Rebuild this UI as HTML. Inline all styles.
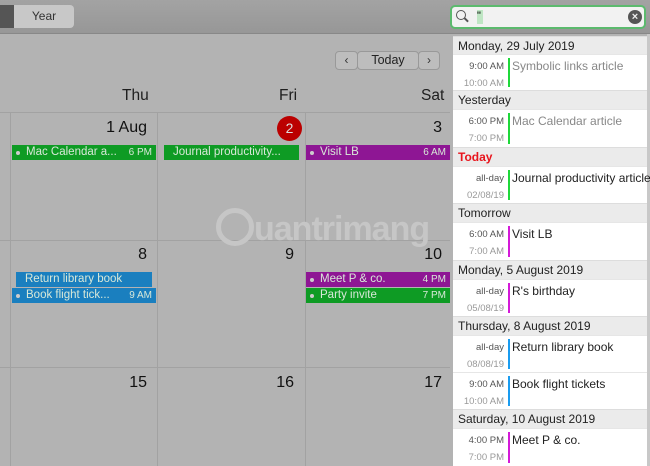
<!DOCTYPE html>
<html><head><style>
*{margin:0;padding:0;box-sizing:border-box}
body{width:650px;height:466px;overflow:hidden;background:#b3b3b3;font-family:"Liberation Sans",sans-serif;position:relative}
.abs{position:absolute}
.tb{left:0;top:0;width:650px;height:34px;background:linear-gradient(#a3a3a3,#979797);border-bottom:1px solid #888}
.vl{top:112px;width:1px;height:354px;background:#a2a2a2}
.hl{left:0;width:450px;height:1px;background:#a2a2a2}
.dn{font-size:15.5px;color:#1e1e1e}
.num{font-size:16px;color:#111;text-align:right}
.ev{height:15px;font-size:11.5px;color:#d8e8d8;line-height:15px;white-space:nowrap;overflow:hidden}
.ev .t{position:absolute;right:4px;top:0;font-size:10px}
.panel{left:453px;top:36px;width:194px;height:430px;background:#fff}
.sh{position:absolute;left:0;width:194px;height:19px;background:#ebebeb;font-size:12px;color:#222;padding-left:5px;line-height:19px;border-top:1px solid #ddd}
.row{position:absolute;left:0;width:194px;border-top:1px solid #e6e6e6}
.row .a{position:absolute;right:143px;top:6px;font-size:9.5px;color:#555;white-space:nowrap}
.row .b{position:absolute;right:143px;top:23px;font-size:9.5px;color:#999;white-space:nowrap}
.row .bar{position:absolute;left:55px;top:3px;width:2px;bottom:3px}
.row .n{position:absolute;left:59px;top:4px;font-size:12px;color:#222;white-space:nowrap}
</style></head><body>
<div class="abs tb"></div>
<div class="abs" style="left:0;top:5px;width:14px;height:23px;background:#555"></div>
<div class="abs" style="left:14px;top:5px;width:60px;height:23px;background:#c8c8c8;border-radius:0 4px 4px 0;font-size:12px;color:#333;line-height:23px;text-align:center">Year</div>
<div class="abs" style="left:335px;top:51px;width:23px;height:19px;background:#bdbdbd;border:1px solid #999;border-radius:4px;font-size:12px;text-align:center;line-height:17px;color:#333">&lsaquo;</div>
<div class="abs" style="left:357px;top:51px;width:62px;height:19px;background:#bdbdbd;border:1px solid #999;border-radius:4px;font-size:12.5px;text-align:center;line-height:17px;color:#222">Today</div>
<div class="abs" style="left:418px;top:51px;width:22px;height:19px;background:#bdbdbd;border:1px solid #999;border-radius:4px;font-size:12px;text-align:center;line-height:17px;color:#333">&rsaquo;</div>
<div class="abs dn" style="left:122px;top:87px">Thu</div>
<div class="abs dn" style="left:279px;top:87px">Fri</div>
<div class="abs dn" style="left:421px;top:87px">Sat</div>
<div class="abs hl" style="top:112px"></div>
<div class="abs hl" style="top:240px"></div>
<div class="abs hl" style="top:367px"></div>
<div class="abs vl" style="left:10px"></div>
<div class="abs vl" style="left:157px"></div>
<div class="abs vl" style="left:305px"></div>
<div class="abs num" style="left:60px;top:119px;width:87px">1 Aug</div>
<div class="abs" style="left:277px;top:116px;width:25px;height:25px;border-radius:50%;background:#b00;color:#ddd;font-size:14px;text-align:center;line-height:25px">2</div>
<div class="abs num" style="left:350px;top:119px;width:92px">3</div>
<div class="abs num" style="left:60px;top:246px;width:87px">8</div>
<div class="abs num" style="left:200px;top:246px;width:94px">9</div>
<div class="abs num" style="left:350px;top:246px;width:92px">10</div>
<div class="abs num" style="left:60px;top:374px;width:87px">15</div>
<div class="abs num" style="left:200px;top:374px;width:94px">16</div>
<div class="abs num" style="left:350px;top:374px;width:92px">17</div>
<div class="abs ev" style="left:12px;top:145px;width:144px;background:#0e9b24;padding-left:14px">Mac Calendar a...<span class="t">6 PM</span><span style="position:absolute;left:4px;top:6px;width:4px;height:4px;border-radius:50%;background:#ccc"></span></div>
<div class="abs ev" style="left:164px;top:145px;width:135px;background:#0e9b24;padding-left:9px">Journal productivity...</div>
<div class="abs ev" style="left:306px;top:145px;width:144px;background:#8e1694;padding-left:14px">Visit LB<span class="t">6 AM</span><span style="position:absolute;left:4px;top:6px;width:4px;height:4px;border-radius:50%;background:#ccc"></span></div>
<div class="abs ev" style="left:16px;top:272px;width:136px;background:#1a7fbf;padding-left:9px">Return library book</div>
<div class="abs ev" style="left:12px;top:288px;width:144px;background:#1a7fbf;padding-left:14px">Book flight tick...<span class="t">9 AM</span><span style="position:absolute;left:4px;top:6px;width:4px;height:4px;border-radius:50%;background:#ccc"></span></div>
<div class="abs ev" style="left:306px;top:272px;width:144px;background:#8e1694;padding-left:14px">Meet P &amp; co.<span class="t">4 PM</span><span style="position:absolute;left:4px;top:6px;width:4px;height:4px;border-radius:50%;background:#ccc"></span></div>
<div class="abs ev" style="left:306px;top:288px;width:144px;background:#0e9b24;padding-left:14px">Party invite<span class="t">7 PM</span><span style="position:absolute;left:4px;top:6px;width:4px;height:4px;border-radius:50%;background:#ccc"></span></div>
<div class="abs" style="left:216px;top:208px;width:38px;height:38px;border-radius:50%;border:5px solid #c6c6c6"></div>
<div class="abs" style="left:254px;top:210px;font-size:34px;font-weight:bold;color:#c6c6c6;letter-spacing:-1px">uantrimang</div>
<div class="abs" style="left:647px;top:34px;width:3px;height:432px;background:#c8c8c8"></div>
<div class="abs" style="left:450px;top:5px;width:196px;height:24px;background:#f2f2f2;border:2px solid #5cba6e;border-radius:5px"></div>
<div class="abs" style="left:456px;top:10px;width:10px;height:10px;border:1.5px solid #555;border-radius:50%"></div>
<div class="abs" style="left:464px;top:19px;width:5px;height:1.5px;background:#555;transform:rotate(45deg)"></div>
<div class="abs" style="left:477px;top:10px;width:6px;height:14px;background:#bfe6c4;font-size:11px;line-height:12px">"</div>
<div class="abs" style="left:628px;top:10px;width:14px;height:14px;border-radius:50%;background:#555;color:#eee;font-size:11px;text-align:center;line-height:14px;font-weight:bold">×</div>
<div class="abs panel">
<div class="sh" style="top:0">Monday, 29 July 2019</div>
<div class="row" style="top:18px;height:36px"><div class="a">9:00 AM</div><div class="b">10:00 AM</div><div class="bar" style="background:#1fd83a"></div><div class="n" style="color:#888">Symbolic links article</div></div>
<div class="sh" style="top:54px">Yesterday</div>
<div class="row" style="top:73px;height:38px"><div class="a">6:00 PM</div><div class="b">7:00 PM</div><div class="bar" style="background:#1fd83a"></div><div class="n" style="color:#888">Mac Calendar article</div></div>
<div class="sh" style="top:111px;color:#e8141c;font-weight:bold">Today</div>
<div class="row" style="top:130px;height:37px"><div class="a">all-day</div><div class="b">02/08/19</div><div class="bar" style="background:#1fd83a"></div><div class="n">Journal productivity article</div></div>
<div class="sh" style="top:167px">Tomorrow</div>
<div class="row" style="top:186px;height:38px"><div class="a">6:00 AM</div><div class="b">7:00 AM</div><div class="bar" style="background:#d41ad8"></div><div class="n">Visit LB</div></div>
<div class="sh" style="top:224px">Monday, 5 August 2019</div>
<div class="row" style="top:243px;height:37px"><div class="a">all-day</div><div class="b">05/08/19</div><div class="bar" style="background:#d41ad8"></div><div class="n">R's birthday</div></div>
<div class="sh" style="top:280px">Thursday, 8 August 2019</div>
<div class="row" style="top:299px;height:37px"><div class="a">all-day</div><div class="b">08/08/19</div><div class="bar" style="background:#1a9cf0"></div><div class="n">Return library book</div></div>
<div class="row" style="top:336px;height:37px"><div class="a">9:00 AM</div><div class="b">10:00 AM</div><div class="bar" style="background:#1a9cf0"></div><div class="n">Book flight tickets</div></div>
<div class="sh" style="top:373px">Saturday, 10 August 2019</div>
<div class="row" style="top:392px;height:38px"><div class="a">4:00 PM</div><div class="b">7:00 PM</div><div class="bar" style="background:#d41ad8"></div><div class="n">Meet P &amp; co.</div></div>
</div>
</body></html>
